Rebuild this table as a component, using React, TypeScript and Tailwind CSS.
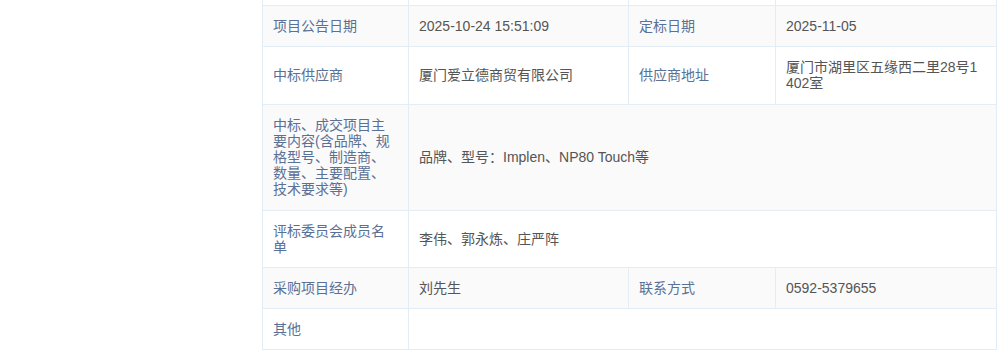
import React from "react";

type Cell = { label: string; value: string };
type Row =
  | { kind: "pair"; left: Cell; right: Cell }
  | { kind: "wide"; cell: Cell };

const rows: Row[] = [
  {
    kind: "pair",
    left: { label: "项目公告日期", value: "2025-10-24 15:51:09" },
    right: { label: "定标日期", value: "2025-11-05" },
  },
  {
    kind: "pair",
    left: { label: "中标供应商", value: "厦门爱立德商贸有限公司" },
    right: { label: "供应商地址", value: "厦门市湖里区五缘西二里28号1402室" },
  },
  {
    kind: "wide",
    cell: {
      label: "中标、成交项目主要内容(含品牌、规格型号、制造商、数量、主要配置、技术要求等)",
      value: "品牌、型号：Implen、NP80 Touch等",
    },
  },
  {
    kind: "wide",
    cell: { label: "评标委员会成员名单", value: "李伟、郭永炼、庄严阵" },
  },
  {
    kind: "pair",
    left: { label: "采购项目经办", value: "刘先生" },
    right: { label: "联系方式", value: "0592-5379655" },
  },
  { kind: "wide", cell: { label: "其他", value: "" } },
];

const td = "border border-[#e2edf6] pl-[10px] pr-[10px] py-[12px] align-middle break-all";
const th = `${td} text-[#5a7095] font-normal text-left`;
const tv = `${td} !pr-[14px] text-[#555555]`;

const App: React.FC = () => {
  return (
    <div
      className="w-[1002px] h-[355px] overflow-hidden bg-white pl-[262px]"
      style={{ fontFamily: '"Liberation Sans", "Noto Sans CJK SC", sans-serif' }}
    >
      <table className="-mt-[36px] w-[734px] table-fixed border-collapse text-[14px] leading-[16.2px]">
        <colgroup>
          <col className="w-[146px]" />
          <col className="w-[220px]" />
          <col className="w-[147px]" />
          <col className="w-[221px]" />
        </colgroup>
        <tbody>
          {/* tail of the previous row */}
          <tr className="h-[41px] bg-white">
            <td className={td}></td>
            <td className={td}></td>
            <td className={td}></td>
            <td className={td}></td>
          </tr>
          {rows.map((row, i) => (
            <tr key={i} className={i % 2 === 0 ? "bg-[#fafafa]" : "bg-white"}>
              {row.kind === "pair" ? (
                <>
                  <th className={th}>{row.left.label}</th>
                  <td className={tv}>{row.left.value}</td>
                  <th className={th}>{row.right.label}</th>
                  <td className={tv}>{row.right.value}</td>
                </>
              ) : (
                <>
                  <th className={th}>{row.cell.label}</th>
                  <td className={tv} colSpan={3}>
                    {row.cell.value}
                  </td>
                </>
              )}
            </tr>
          ))}
        </tbody>
      </table>
    </div>
  );
};

export default App;
